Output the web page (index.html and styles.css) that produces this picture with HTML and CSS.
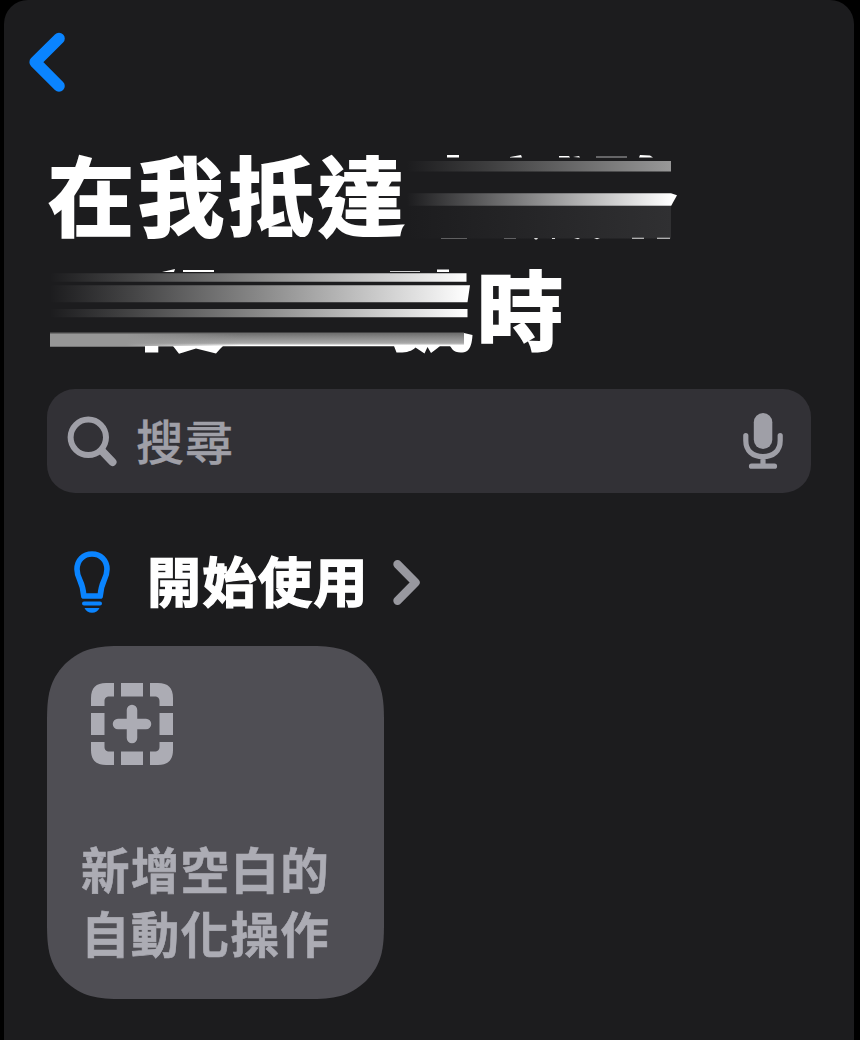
FILE: index.html
```html
<!DOCTYPE html>
<html lang="zh-Hant">
<head>
<meta charset="utf-8">
<title>自動化操作</title>
<link rel="stylesheet" href="styles.css">
</head>
<body>
<main class="sheet">
  <header class="nav">
    <svg class="back" width="40" height="64" viewBox="0 0 40 64" fill="none" stroke="#0a84ff" stroke-width="11.6" stroke-linecap="round" stroke-linejoin="round"><path d="M31 8.5 7.2 32.200 31 56"/></svg>
  </header>
  <h1 class="title">
    <span class="line">在我抵達</span>
    <span class="line line-end">時</span>
    <svg class="smear" width="640" height="230" viewBox="48 138 640 230">
      <defs>
        <linearGradient id="dim" gradientUnits="userSpaceOnUse" x1="407" x2="671" y1="0" y2="0"><stop stop-color="#1c1c1e"/><stop offset=".3" stop-color="#3d3d3e"/><stop offset="1" stop-color="#989898"/></linearGradient>
        <linearGradient id="bright" gradientUnits="userSpaceOnUse" x1="407" x2="671" y1="0" y2="0"><stop stop-color="#1c1c1e"/><stop offset="1" stop-color="#fff"/></linearGradient>
        <linearGradient id="shade" gradientUnits="userSpaceOnUse" x1="407" x2="671" y1="0" y2="0"><stop stop-color="#1c1c1e"/><stop offset="1" stop-color="#303032"/></linearGradient>
        <linearGradient id="row" gradientUnits="userSpaceOnUse" x1="50" x2="468" y1="0" y2="0"><stop stop-color="#1c1c1e"/><stop offset=".2" stop-color="#454546"/><stop offset=".5" stop-color="#888"/><stop offset=".9" stop-color="#e6e6e6"/><stop offset="1" stop-color="#fff"/></linearGradient>
        <linearGradient id="base" gradientUnits="userSpaceOnUse" x1="0" x2="0" y1="332" y2="347"><stop stop-color="#666"/><stop offset=".35" stop-color="#888"/><stop offset=".75" stop-color="#aaa"/><stop offset=".9" stop-color="#fff"/></linearGradient>
        <linearGradient id="basefade" gradientUnits="userSpaceOnUse" x1="50" x2="240" y1="0" y2="0"><stop stop-color="#969696"/><stop offset=".4" stop-color="#969696"/><stop offset="1" stop-color="#969696" stop-opacity="0"/></linearGradient>
      </defs>
      <g fill="#fff">
        <path d="M447 155h12v2.500h-12zM510 157l11-2 1 2.500h-12zM559 156h10l1 1.500h-11zM573 157l6-1 1 1.500zM640 155l10 .500 3 2h-14z"/>
        <path d="M596 156.500h31v1h-31z" opacity=".65"/>
      </g>
      <path fill="url(#dim)" d="M407 161h264v10.500H407z"/>
      <path fill="url(#bright)" d="M407 193.300h264l6 2-5.800 10.400H407z"/>
      <path fill="url(#shade)" d="M407 206h264v32.500H407z"/>
      <g fill="#ddd"><path d="M441 238h26v1h-26zM504 238h12v1h-12z" opacity=".35"/><path d="M534 238h4l-1 1.500h-2zM552 238h3v1h-3zM574 238h6l-2 1.200zM594 238h6l-3 1.200zM632 237.800h12v1h-12zM657 237.800h13v1h-13z"/></g>
      <g fill="#fff"><path d="m162 272 13-3-1 3zM183 270h31v2h-31zM437 269.500h12v2.500h-12z"/><path d="M390 271h30v1h-30z" opacity=".8"/></g>
      <path fill="url(#row)" d="M50 273.300h416.500v8.500H50zM50 285.300h420l-2.500 17H50zM50 309h417.500v8.300H50z"/>
      <path fill="url(#base)" d="M50 332.500h414v13.800H50z"/>
      <path fill="url(#basefade)" d="M50 334h190v12.400H50z"/>
      <g fill="#fff"><path d="M145 346h13.300v6.500H145zM173 346h50l-3 3-4 4.500-20-5-17 5.200zM394 346h46l-3 2.500-6 4.500-3.500-6-3 6.500-9-6c-4 4-10 5.500-19 5zM450 346h14V333l8.500 2c-.5 8-2 13.500-5.500 16-4 2.500-12 2-14.500-1.500z"/></g>
    </svg>
  </h1>
  <div class="search">
    <svg width="52" height="54" viewBox="0 0 52 54" fill="none" stroke="#9f9fa7" stroke-linecap="round"><circle cx="22.300" cy="23.300" r="17.700" stroke-width="6"/><path d="m36.500 37.500 10 10.500" stroke-width="8"/></svg>
    <span class="placeholder">搜尋</span>
    <svg class="mic" width="40" height="56" viewBox="0 0 40 56" fill="none" stroke="#9f9fa7" stroke-width="5.200" stroke-linecap="round"><rect x="10.800" y="0" width="18.500" height="36" rx="9.250" fill="#9f9fa7" stroke="none"/><path d="M2.800 22.500v5c0 10.500 7 16.200 17.200 16.200s17.200-5.700 17.200-16.200v-5M20 44v9M8.500 53.200h23"/></svg>
  </div>
  <div class="section">
    <svg width="38" height="64" viewBox="0 0 38 64" fill="none" stroke="#0a84ff"><path stroke-width="5.600" stroke-linejoin="round" d="M10.800 46C10.200 38 9.200 35 6.800 30 4.600 25.500 4 22.500 4 19.300 4 10 10.500 4 19 4s15 6 15 15.300c0 3.200-.6 6.200-2.800 10.700-2.400 5-3.400 8-4 16z"/><path stroke-width="4" stroke-linecap="round" d="M11 53.400h16"/><path d="M11.500 58h15c-1.300 3.200-4 4.800-7.500 4.800s-6.200-1.600-7.500-4.800z" fill="#0a84ff" stroke="none"/></svg>
    <h2>開始使用</h2>
    <svg class="more" width="28" height="46" viewBox="0 0 28 46" fill="none" stroke="#98989f" stroke-width="8.400" stroke-linecap="round" stroke-linejoin="round"><path d="m4.500 5.300 18 18.200-18 18.200"/></svg>
  </div>
  <section class="card">
    <svg class="card-bg" width="337" height="353" viewBox="0 0 337 353"><path fill="#4f4e54" d="M76 0H261C287 0 302 2 319 18 335 35 337 50 337 76V277C337 303 335 318 319 335 302 351 287 353 261 353H76C50 353 35 351 18 335 2 318 0 303 0 277V76C0 50 2 35 18 18 35 2 50 0 76 0Z"/></svg>
    <svg class="add" width="82" height="82" viewBox="0 0 82 82" fill="#acacb4"><path d="M23 0v13.500h-4.500c-3.500 0-5 1.500-5 5V23H0V15C0 5 5 0 15 0zM59 0v13.500h4.500c3.500 0 5 1.500 5 5V23H82V15C82 5 77 0 67 0zM23 82V68.500h-4.500c-3.500 0-5-1.500-5-5V59H0v8c0 10 5 15 15 15zM59 82V68.500h4.500c3.500 0 5-1.500 5-5V59H82v8c0 10-5 15-15 15zM30 0h22v13.500H30zM30 68.500h22V82H30zM0 30h13.500v22H0zM68.500 30H82v22H68.500z"/><path d="M27 41h28M41 27v28" stroke="#acacb4" stroke-width="10.500" stroke-linecap="round"/></svg>
    <p>新增空白的<br>自動化操作</p>
  </section>
</main>
</body>
</html>
```
FILE: styles.css
```css
* { box-sizing: border-box; }
body {
  margin: 0;
  background: #000;
  font-family: "Noto Sans CJK TC", sans-serif;
}
.sheet {
  width: 850px;
  height: 1040px;
  margin-left: 4px;
  padding: 0 43px;
  overflow: hidden;
  background: #1c1c1e;
  border-radius: 24px 24px 0 0;
}
.nav { height: 136px; padding-top: 30px; }
.back { display: block; margin-left: -19px; }
.title {
  position: relative;
  height: 253px;
  margin: 0;
  padding-left: 1px;
  color: #fff;
  font-size: 86px;
  font-weight: 700;
  line-height: 114px;
  letter-spacing: 4px;
  -webkit-text-stroke: 2.2px #fff;
}
.line { display: block; }
.line-end { padding-left: 429px; }
.smear { position: absolute; top: 2px; left: 1px; }
.search {
  display: flex;
  align-items: center;
  width: 764px;
  height: 104px;
  padding: 0 28px 0 19px;
  border-radius: 28px;
  background: #323136;
}
.placeholder {
  margin: -5px 0 0 18px;
  color: #9f9fa7;
  font-size: 48px;
  font-weight: 500;
  line-height: 60px;
  letter-spacing: 1px;
  -webkit-text-stroke: .3px #9f9fa7;
}
.mic { margin-left: auto; }
.section {
  display: flex;
  align-items: center;
  height: 80px;
  margin: 49px 0 24px;
  padding-left: 26px;
}
.section h2 {
  margin: -4px 0 0 36px;
  color: #fff;
  font-size: 54px;
  font-weight: 700;
  line-height: 80px;
  letter-spacing: 1.5px;
  -webkit-text-stroke: 1.4px #fff;
}
.more { margin-left: 24px; }
.card {
  position: relative;
  width: 337px;
  height: 353px;
  padding: 37px 34px;
}
.card-bg { position: absolute; inset: 0; }
.add { position: relative; display: block; margin-left: 10px; }
.card p {
  position: relative;
  margin: 71px 0 0;
  color: #acacb4;
  font-size: 48.5px;
  font-weight: 700;
  line-height: 64px;
  letter-spacing: 1.3px;
  white-space: nowrap;
  -webkit-text-stroke: .6px #acacb4;
}
```
